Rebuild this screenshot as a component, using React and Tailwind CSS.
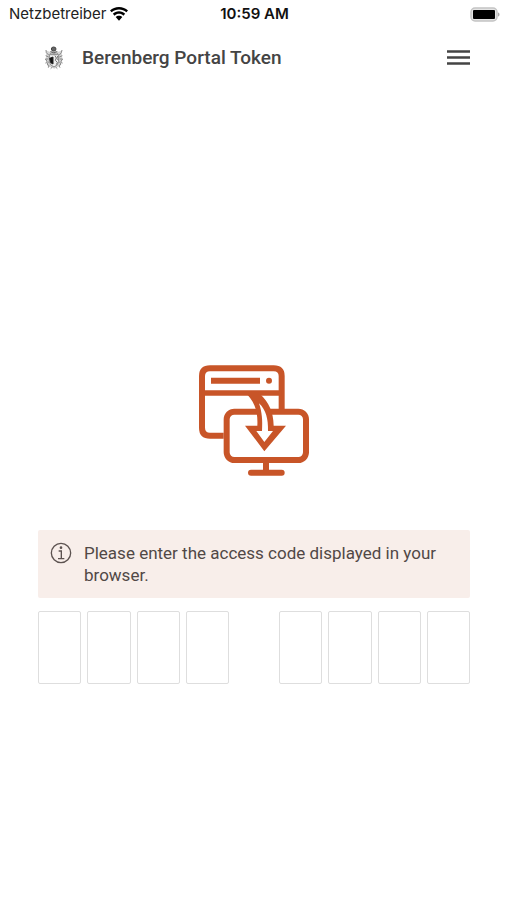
const group = [1, 2, 3, 4];

function WifiIcon() {
  return (
    <svg width="18" height="14" viewBox="0 0 54 42" aria-hidden="true">
      <path d="M27 0C16.500 0 7 4 0 10.500L5 16C11 10.500 18.500 7.500 27 7.500S43 10.500 49 16L54 10.500C47 4 37.500 0 27 0Z" />
      <path d="M27 13C19.500 13 13 16 8.500 20.500L14 26C17.500 22.500 22 20.500 27 20.500S36.500 22.500 40 26L45.500 20.500C41 16 34.500 13 27 13Z" />
      <path d="M27 26C23 26 19.500 27.500 17 30L27 41L37 30C34.500 27.500 31 26 27 26Z" />
    </svg>
  );
}

function BatteryIcon() {
  return (
    <svg width="30" height="15" viewBox="0 0 30 15" aria-label="Battery full">
      <rect x="1" y="1" width="26" height="13" rx="4" fill="#e4e4e4" stroke="#c4c4c4" strokeWidth="1.500" />
      <rect x="3" y="3" width="22" height="9" rx="1" fill="#000" />
      <path d="M28 5.500C30 6 30 9 28 9.500Z" fill="#aaa" />
    </svg>
  );
}

function CrestIcon() {
  return (
    <svg width="20" height="24" viewBox="0 0 60 72" aria-hidden="true" fill="none" stroke="#888" strokeWidth="3">
      <path d="M8 14L20 18L29 6L40 18L52 14L55 36L51 58L31 68L10 60L5 38Z" fill="#d4d4d4" stroke="none" />
      <ellipse cx="29" cy="9" rx="7" ry="6" fill="#666" stroke="#444" />
      <path d="M19 17L29 20L40 17" stroke="#555" />
      <path d="M16 26H44V46Q43 58 30 63Q17 58 16 46Z" fill="#eee" />
      <path d="M14 27L7 20L6 12M14 33L5 29M13 39L4 39L9 46L5 52M14 47L9 54L15 59L13 65M25 63L20 68M46 27L52 20L54 12M46 33L55 29M47 39L56 39L51 46L55 52M46 47L51 54L45 59L48 65M35 63L40 68" />
      <path d="M18 22L24 25L30 21L36 25L42 22" stroke="#999" />
      <path d="M17 37L27 33V54L20 50Z" fill="#111" stroke="#222" />
      <path d="M33 29L37 36L34 43L40 49L37 56M41 30L39 37L43 43" stroke="#777" />
    </svg>
  );
}

function MenuIcon() {
  return (
    <svg width="24" height="24" viewBox="0 0 24 24" aria-hidden="true" stroke="#444" strokeWidth="2.400">
      <path d="M1 5.500H24M1 11.500H24M1 17.500H24" />
    </svg>
  );
}

function TransferIcon() {
  return (
    <svg width="110" height="111" viewBox="27 28 330 333" aria-hidden="true" fill="none" stroke="#c85528" strokeWidth="18">
      <path d="M101 240H60Q36 240 36 216V61Q36 38 60 38H251Q275 38 275 61V160" />
      <path d="M36 112H275" strokeWidth="16" />
      <path d="M63 75H210" />
      <circle cx="237" cy="75" r="9" fill="#c85528" stroke="none" />
      <rect x="110" y="168" width="238" height="145" rx="23" />
      <path d="M228 318V345" />
      <path d="M183 351H275" strokeLinecap="round" />
      <path d="M171 116H211C237 142 250 168 251 210H288L223 287L165 210H202C204 172 196 142 171 116Z" fill="#c85528" stroke="none" />
      <path d="M207 143C216 170 218 194 216 226H199L223 259L249 226H234C235 190 228 163 207 143Z" fill="#fff" stroke="none" />
    </svg>
  );
}

function InfoIcon() {
  return (
    <svg className="shrink-0" width="22" height="22" viewBox="0 0 66 66" aria-hidden="true" fill="none" stroke="#5c5250" strokeWidth="4">
      <circle cx="33" cy="33" r="29" />
      <path d="M26 27H34V50M24 50H43" />
      <circle cx="33" cy="17" r="4" fill="#5c5250" stroke="none" />
    </svg>
  );
}

function CodeGroup({ start }) {
  return (
    <div className="grid flex-1 grid-cols-4 gap-[6px]">
      {group.map((n) => (
        <input
          key={n}
          type="text"
          maxLength={1}
          aria-label={`Access code character ${start + n}`}
          className="h-[73px] w-full min-w-0 rounded-[2px] border border-[#dedede] bg-white text-center text-2xl text-[#444]"
        />
      ))}
    </div>
  );
}

export default function App() {
  return (
    <div className="min-h-screen bg-white font-['Roboto',sans-serif] text-[#444]">
      <div className="grid h-7 grid-cols-3 items-center pl-[9px] pr-[7px] font-['Inter',sans-serif] text-[15px] leading-5 text-black">
        <div className="flex items-center gap-1 text-[#222]">
          <span>Netzbetreiber</span>
          <WifiIcon />
        </div>
        <span className="text-center font-semibold text-[#111]">10:59 AM</span>
        <div className="flex justify-end">
          <BatteryIcon />
        </div>
      </div>

      <header className="flex h-[60px] items-center pl-11 pr-[37px]">
        <CrestIcon />
        <h1 className="ml-[18px] flex-1 text-[19px] font-medium leading-6">Berenberg Portal Token</h1>
        <button type="button" aria-label="Open menu">
          <MenuIcon />
        </button>
      </header>

      <main className="pl-[38px] pr-[37px] pt-[277px]">
        <div className="flex justify-center">
          <TransferIcon />
        </div>
        <div className="mt-[54px] flex items-start gap-3 rounded-[2px] bg-[#f8eeea] p-3">
          <InfoIcon />
          <p className="text-[17px] leading-[22px] text-[#514846]">Please enter the access code displayed in your browser.</p>
        </div>
        <form className="mt-[13px] flex gap-[50px]">
          <CodeGroup start={0} />
          <CodeGroup start={4} />
        </form>
      </main>
    </div>
  );
}
